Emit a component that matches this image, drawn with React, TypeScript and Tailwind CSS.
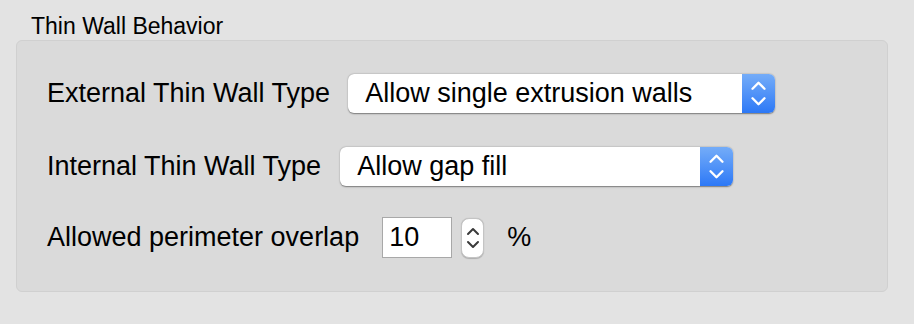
import React from "react";

function Chevrons({ color, w, h, sw }: { color: string; w: number; h: number; sw: number }) {
  return (
    <svg width={w} height={h} viewBox="0 0 14 26" fill="none">
      <path d="M2 9 L7 4 L12 9" stroke={color} strokeWidth={sw} strokeLinecap="round" strokeLinejoin="round" />
      <path d="M2 17 L7 22 L12 17" stroke={color} strokeWidth={sw} strokeLinecap="round" strokeLinejoin="round" />
    </svg>
  );
}

function PopUp({ value, width }: { value: string; width: string }) {
  return (
    <div className={`${width} flex h-[39px] rounded-[6px] shadow-[0_0.5px_1.5px_rgba(0,0,0,0.45)] bg-white overflow-hidden`}>
      <div className="flex-1 flex items-center pl-[17px] text-[27px] text-black">{value}</div>
      <div className="w-[33px] flex items-center justify-center bg-gradient-to-b from-[#74acf8] to-[#2c78f6]">
        <Chevrons color="#ffffff" w={17} h={31} sw={2} />
      </div>
    </div>
  );
}

export default function App() {
  return (
    <div className="w-[914px] h-[324px] bg-[#e3e3e3] font-['Liberation_Sans',Arial,sans-serif] text-black pt-[12px]">
      <div className="pl-[31px] text-[23px] leading-[28px]">Thin Wall Behavior</div>
      <div className="ml-[16px] w-[872px] h-[252px] rounded-[6px] border border-[#d0d0d0] bg-[#dadada] pl-[30px] pt-[33px]">
        <div className="flex items-center h-[39px] gap-[18px]">
          <span className="text-[27px]">External Thin Wall Type</span>
          <PopUp value="Allow single extrusion walls" width="w-[427px]" />
        </div>
        <div className="flex items-center h-[39px] gap-[19px] mt-[34px]">
          <span className="text-[27px]">Internal Thin Wall Type</span>
          <PopUp value="Allow gap fill" width="w-[393px]" />
        </div>
        <div className="flex items-center h-[41px] mt-[31px]">
          <span className="text-[27px]">Allowed perimeter overlap</span>
          <div className="ml-[23px] w-[70px] h-[41px] bg-white border border-[#a8a8a8] flex items-center pl-[6px] text-[27px]">10</div>
          <div className="ml-[9px] w-[23px] h-[40px] bg-white rounded-[8px] border border-[#c4c4c4] shadow-[0_0.5px_1px_rgba(0,0,0,0.2)] flex items-center justify-center">
            <Chevrons color="#3a3a3a" w={14} h={28} sw={2} />
          </div>
          <span className="ml-[23px] text-[27px]">%</span>
        </div>
      </div>
    </div>
  );
}
